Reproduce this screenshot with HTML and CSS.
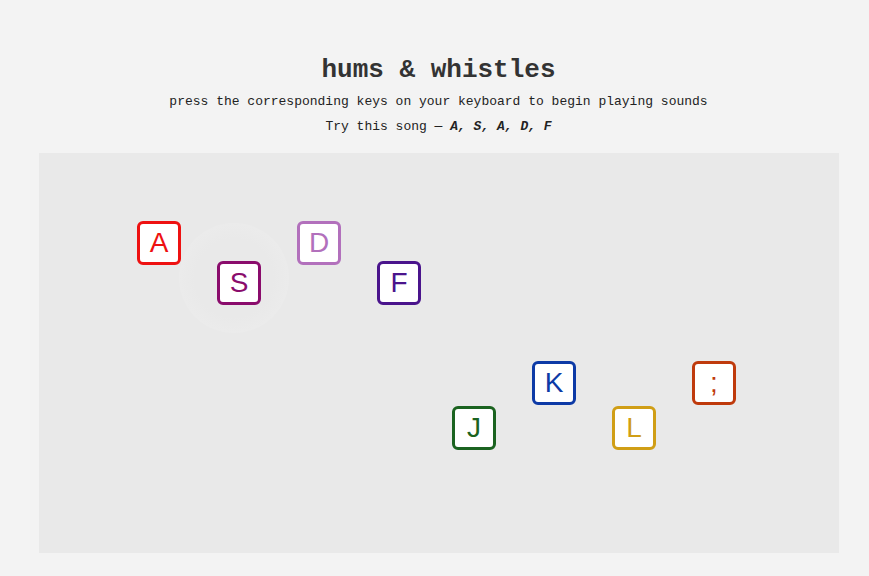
FILE: index.html
```html
<!DOCTYPE html>
<html>
<head>
<meta charset="utf-8">
<link rel="stylesheet" href="styles.css">
</head>
<body>
<header class="head">
  <h1 class="title">hums &amp; whistles</h1>
  <p class="sub">press the corresponding keys on your keyboard to begin playing sounds</p>
  <p class="song">Try this song — <b><i>A, S, A, D, F</i></b></p>
</header>
<main class="stage">
  <div class="ripple"></div>
  <div class="key k-a">A</div>
  <div class="key k-s">S</div>
  <div class="key k-d">D</div>
  <div class="key k-f">F</div>
  <div class="key k-j">J</div>
  <div class="key k-k">K</div>
  <div class="key k-l">L</div>
  <div class="key k-semi">;</div>
</main>
</body>
</html>
```
FILE: styles.css
```css
html, body { margin: 0; padding: 0; }
body {
  background: #f3f3f3;
  font-family: "Liberation Mono", "Courier New", monospace;
  color: #333;
  width: 869px;
  height: 576px;
  overflow: hidden;
}
.head {
  text-align: center;
  padding: 55px 0 0 8px;
}
.title {
  margin: 0;
  font-size: 26px;
  line-height: 30px;
  font-weight: bold;
  color: #333;
}
.sub {
  margin: 9px 0 0;
  font-size: 13px;
  line-height: 16px;
  color: #222;
}
.song {
  margin: 9px 0 0;
  font-size: 13px;
  line-height: 16px;
  color: #222;
}
.stage {
  position: relative;
  width: 800px;
  height: 400px;
  margin: 18px 0 0 39px;
  background: #e9e9e9;
}
.ripple {
  position: absolute;
  left: 140px;
  top: 70px;
  width: 110px;
  height: 110px;
  border-radius: 50%;
  background: radial-gradient(circle, rgba(235,235,235,0) 50%, rgba(237,237,237,0.7) 78%, rgba(233,233,233,0) 100%);
}
.key {
  position: absolute;
  box-sizing: border-box;
  width: 44px;
  height: 44px;
  border: 3px solid;
  border-radius: 6px;
  background: #fff;
  font-family: "Liberation Sans", Arial, sans-serif;
  font-size: 28px;
  line-height: 38px;
  text-align: center;
}
.k-a { left: 98px; top: 68px; color: #ee1111; border-color: #ee1111; }
.k-s { left: 178px; top: 108px; color: #8a0c6c; border-color: #8a0c6c; }
.k-d { left: 258px; top: 68px; color: #b270bc; border-color: #b270bc; }
.k-f { left: 338px; top: 108px; color: #4a148c; border-color: #4a148c; }
.k-j { left: 413px; top: 253px; color: #1b6320; border-color: #1b6320; }
.k-k { left: 493px; top: 208px; color: #0d3aa6; border-color: #0d3aa6; }
.k-l { left: 573px; top: 253px; color: #d09e16; border-color: #d09e16; }
.k-semi { left: 653px; top: 208px; color: #bf3a0c; border-color: #bf3a0c; }
```
